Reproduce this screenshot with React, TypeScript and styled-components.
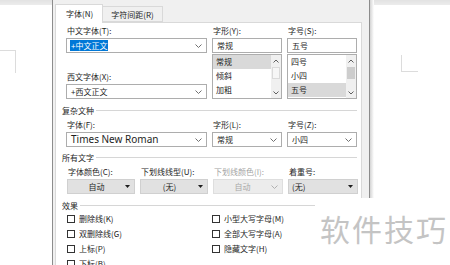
import React from "react";
import styled, { createGlobalStyle } from "styled-components";

const GlobalStyle = createGlobalStyle`
    html, body {
        margin: 0;
        padding: 0;
        background: #ffffff;
    }
    body {
        font-family: "Noto Sans CJK SC", "Noto Sans", sans-serif;
    }
`;

const Frame = styled.div`
    width: 450px;
    height: 265px;
    position: relative;
    overflow: hidden;
    display: flex;
    background: #ffffff;
    font-family: "Noto Sans CJK SC", "Noto Sans", sans-serif;
    font-size: 8px;
    color: #1e1e1e;
`;

const PageSide = styled.div<{ $width: number }>`
    width: ${(p) => p.$width}px;
    flex: none;
    display: flex;
    flex-direction: column;
`;

const TopBar = styled.div`
    height: 5px;
    background: linear-gradient(#e2e2e2, #ececec);
`;

const LeftCorner = styled.div`
    margin-top: 45px;
    width: 15px;
    height: 22px;
    border-top: 1px solid #dcdcdc;
    border-right: 1px solid #dcdcdc;
`;

const RightCorner = styled.div`
    margin: 50px 0 0 27px;
    width: 16px;
    height: 16px;
    border-left: 1px solid #dcdcdc;
    border-bottom: 1px solid #dcdcdc;
`;

const RightArea = styled.div`
    flex: 1;
    display: flex;
`;

const DialogEdge = styled.div`
    width: 6px;
    height: 198px;
    flex: none;
    background: linear-gradient(to right, #f0f0f0 0, #f0f0f0 1px, #8c8c8c 1px, #8c8c8c 2px, #d4d4d4 2px, #ffffff 6px);
`;

const Dialog = styled.div`
    width: 313px;
    flex: none;
    border-left: 1px solid #8c8c8c;
    background: #f0f0f0;
    display: flex;
    flex-direction: column;
    padding-left: 2px;
`;

const TabBar = styled.div`
    display: flex;
    align-items: flex-end;
    height: 18px;
    margin-top: 4px;
    position: relative;
    z-index: 1;
`;

const Tab = styled.div<{ $active?: boolean }>`
    height: ${(p) => (p.$active ? 19 : 16)}px;
    margin-bottom: ${(p) => (p.$active ? -1 : 0)}px;
    padding: 0 ${(p) => (p.$active ? 9 : 8)}px 0 ${(p) => (p.$active ? 10 : 8)}px;
    display: flex;
    align-items: center;
    background: ${(p) => (p.$active ? "#ffffff" : "#f0f0f0")};
    border: 1px solid #d9d9d9;
    border-bottom: ${(p) => (p.$active ? "none" : "1px solid #d9d9d9")};
    border-left: ${(p) => (p.$active ? "1px solid #d9d9d9" : "none")};
    box-sizing: border-box;
    padding-bottom: ${(p) => (p.$active ? 2 : 0)}px;
`;

const Panel = styled.div`
    width: 307px;
    flex: 1;
    box-sizing: border-box;
    background: #ffffff;
    border: 1px solid #d9d9d9;
    border-bottom: none;
    padding: 0 4px 0 10px;
    display: flex;
    flex-direction: column;
`;

const TopGrid = styled.div`
    display: grid;
    grid-template-columns: 141px 70px 70px;
    column-gap: 5px;
`;

const Column = styled.div`
    display: flex;
    flex-direction: column;
`;

const Label = styled.div<{ $disabled?: boolean; $gap?: number }>`
    height: 15px;
    line-height: 15px;
    margin-top: ${(p) => p.$gap ?? 0}px;
    padding-left: 1px;
    white-space: nowrap;
    color: ${(p) => (p.$disabled ? "#a3a3a3" : "#1e1e1e")};
`;

const Input = styled.div`
    height: 15px;
    box-sizing: border-box;
    border: 1px solid #adadad;
    background: #ffffff;
    display: flex;
    align-items: center;
    padding: 0 4px 0 3px;
    white-space: nowrap;
`;

const InputText = styled.span<{ $selected?: boolean }>`
    flex: 1;
    display: flex;
    align-items: center;
    & > span {
        background: ${(p) => (p.$selected ? "#0078d7" : "transparent")};
        color: ${(p) => (p.$selected ? "#ffffff" : "#1e1e1e")};
        line-height: 11px;
        padding: 0 1px;
    }
`;

const Latin = styled.span`
    font-family: "Noto Sans", sans-serif;
    font-size: 10px;
`;

const ListBox = styled.div`
    margin-top: 1px;
    height: 45px;
    box-sizing: border-box;
    border: 1px solid #adadad;
    background: #ffffff;
    display: flex;
`;

const ListItems = styled.div`
    flex: 1;
    display: flex;
    flex-direction: column;
`;

const ListItem = styled.div<{ $selected?: boolean }>`
    height: 14px;
    line-height: 14px;
    padding-left: 3px;
    background: ${(p) => (p.$selected ? "#d9d9d9" : "transparent")};
`;

const ScrollBar = styled.div`
    width: 10px;
    flex: none;
    background: #f0f0f0;
    display: flex;
    flex-direction: column;
    align-items: center;
`;

const ScrollArrow = styled.div`
    height: 11px;
    display: flex;
    align-items: center;
    justify-content: center;
`;

const Thumb = styled.div<{ $filled?: boolean }>`
    width: 8px;
    height: 12px;
    margin-top: 1px;
    box-sizing: border-box;
    background: ${(p) => (p.$filled ? "#cdcdcd" : "#f6f6f6")};
    border: 1px solid ${(p) => (p.$filled ? "#cdcdcd" : "#dadada")};
`;

const ScrollTrack = styled.div`
    flex: 1;
`;

const Heading = styled.div<{ $gap: number }>`
    height: 12px;
    margin: ${(p) => p.$gap}px 0 0 -4px;
    display: flex;
    align-items: center;
    gap: 2px;
    white-space: nowrap;
    &::after {
        content: "";
        flex: 1;
        height: 1px;
        background: #d6d6d6;
    }
`;

const EffectsHeading = styled(Heading)`
    width: 253px;
`;

const FourGrid = styled.div`
    display: grid;
    grid-template-columns: 68px 68px 70px 70px;
    column-gap: 5px;
    margin-left: 1px;
`;

const Dropdown = styled.div<{ $disabled?: boolean; $left?: boolean }>`
    height: 15px;
    box-sizing: border-box;
    border: 1px solid ${(p) => (p.$disabled ? "#dedede" : "#d0d0d0")};
    background: ${(p) => (p.$disabled ? "#ececec" : "#e1e1e1")};
    color: ${(p) => (p.$disabled ? "#a8a8a8" : "#1e1e1e")};
    display: flex;
    align-items: center;
    padding: 0 4px 0 ${(p) => (p.$left ? 3 : 0)}px;
    & > span {
        flex: 1;
        text-align: ${(p) => (p.$left ? "left" : "center")};
    }
`;

const CheckGrid = styled.div`
    display: grid;
    grid-template-columns: 145px 1fr;
    margin-left: 1px;
`;

const CheckRow = styled.div`
    height: 15px;
    display: flex;
    align-items: center;
    gap: 4px;
    white-space: nowrap;
`;

const CheckBox = styled.div`
    width: 8px;
    height: 8px;
    box-sizing: border-box;
    border: 1px solid #333333;
    background: #ffffff;
`;

const Watermark = styled.div`
    position: absolute;
    left: 316px;
    top: 198px;
    right: 0;
    bottom: 0;
    background: #ffffff;
    padding: 13px 0 0 4px;
    font-family: "Noto Sans CJK SC", sans-serif;
    font-size: 30px;
    line-height: 34px;
    letter-spacing: 2px;
    color: #c4c4c4;
    white-space: nowrap;
`;

const Chevron = ({ color = "#707070" }: { color?: string }) => (
    <svg width="7" height="4" viewBox="0 0 7 4">
        <polyline points="0.5,0.5 3.5,3.5 6.5,0.5" fill="none" stroke={color} strokeWidth="1" />
    </svg>
);

const Caret = ({ color = "#1e1e1e" }: { color?: string }) => (
    <svg width="5" height="3" viewBox="0 0 5 3">
        <polygon points="0,0 5,0 2.5,3" fill={color} />
    </svg>
);

const ArrowUp = () => (
    <svg width="6" height="4" viewBox="0 0 6 4">
        <polyline points="0.5,3.5 3,1 5.5,3.5" fill="none" stroke="#606060" strokeWidth="1" />
    </svg>
);

const ArrowDown = () => (
    <svg width="6" height="4" viewBox="0 0 6 4">
        <polyline points="0.5,0.5 3,3 5.5,0.5" fill="none" stroke="#606060" strokeWidth="1" />
    </svg>
);

const ComboInput: React.FC<{ children: React.ReactNode; selected?: boolean; chevron?: boolean }> = ({
    children,
    selected,
    chevron = true,
}) => (
    <Input>
        <InputText $selected={selected}>
            <span>{children}</span>
        </InputText>
        {chevron && <Chevron />}
    </Input>
);

interface ListProps {
    items: string[];
    selected: number;
    filledThumb?: boolean;
}

const List: React.FC<ListProps> = ({ items, selected, filledThumb }) => (
    <ListBox>
        <ListItems>
            {items.map((item, i) => (
                <ListItem key={item} $selected={i === selected}>
                    {item}
                </ListItem>
            ))}
        </ListItems>
        <ScrollBar>
            <ScrollArrow>
                <ArrowUp />
            </ScrollArrow>
            <Thumb $filled={filledThumb} />
            <ScrollTrack />
            <ScrollArrow>
                <ArrowDown />
            </ScrollArrow>
        </ScrollBar>
    </ListBox>
);

const effectsLeft = ["删除线(K)", "双删除线(G)", "上标(P)", "下标(B)"];
const effectsRight = ["小型大写字母(M)", "全部大写字母(A)", "隐藏文字(H)"];

const App: React.FC = () => {
    return (
        <>
            <GlobalStyle />
            <Frame>
                <PageSide $width={52}>
                    <TopBar />
                    <LeftCorner />
                </PageSide>
                <Dialog>
                    <TabBar>
                        <Tab $active>字体(N)</Tab>
                        <Tab>字符间距(R)</Tab>
                    </TabBar>
                    <Panel>
                        <TopGrid>
                            <Column>
                                <Label>中文字体(T):</Label>
                                <ComboInput selected>+中文正文</ComboInput>
                                <Label $gap={16}>西文字体(X):</Label>
                                <ComboInput>+西文正文</ComboInput>
                            </Column>
                            <Column>
                                <Label>字形(Y):</Label>
                                <ComboInput chevron={false}>常规</ComboInput>
                                <List items={["常规", "倾斜", "加粗"]} selected={0} />
                            </Column>
                            <Column>
                                <Label>字号(S):</Label>
                                <ComboInput chevron={false}>五号</ComboInput>
                                <List items={["四号", "小四", "五号"]} selected={2} filledThumb />
                            </Column>
                        </TopGrid>

                        <Heading $gap={5}>复杂文种</Heading>
                        <TopGrid>
                            <Column>
                                <Label $gap={1}>字体(F):</Label>
                                <ComboInput>
                                    <Latin>Times New Roman</Latin>
                                </ComboInput>
                            </Column>
                            <Column>
                                <Label $gap={1}>字形(L):</Label>
                                <ComboInput>常规</ComboInput>
                            </Column>
                            <Column>
                                <Label $gap={1}>字号(Z):</Label>
                                <ComboInput>小四</ComboInput>
                            </Column>
                        </TopGrid>

                        <Heading $gap={4}>所有文字</Heading>
                        <FourGrid>
                            <Column>
                                <Label $gap={1}>字体颜色(C):</Label>
                                <Dropdown>
                                    <span>自动</span>
                                    <Caret />
                                </Dropdown>
                            </Column>
                            <Column>
                                <Label $gap={1}>下划线线型(U):</Label>
                                <Dropdown>
                                    <span>(无)</span>
                                    <Caret />
                                </Dropdown>
                            </Column>
                            <Column>
                                <Label $gap={1} $disabled>
                                    下划线颜色(I):
                                </Label>
                                <Dropdown $disabled>
                                    <span>自动</span>
                                    <Chevron color="#b0b0b0" />
                                </Dropdown>
                            </Column>
                            <Column>
                                <Label $gap={1}>着重号:</Label>
                                <Dropdown $left>
                                    <span>(无)</span>
                                    <Caret />
                                </Dropdown>
                            </Column>
                        </FourGrid>

                        <EffectsHeading $gap={5}>效果</EffectsHeading>
                        <CheckGrid>
                            <Column>
                                {effectsLeft.map((e) => (
                                    <CheckRow key={e}>
                                        <CheckBox />
                                        {e}
                                    </CheckRow>
                                ))}
                            </Column>
                            <Column>
                                {effectsRight.map((e) => (
                                    <CheckRow key={e}>
                                        <CheckBox />
                                        {e}
                                    </CheckRow>
                                ))}
                            </Column>
                        </CheckGrid>
                    </Panel>
                </Dialog>
                <RightArea>
                    <DialogEdge />
                    <PageSide $width={76}>
                        <TopBar />
                        <RightCorner />
                    </PageSide>
                </RightArea>
                <Watermark>软件技巧</Watermark>
            </Frame>
        </>
    );
};

export default App;
